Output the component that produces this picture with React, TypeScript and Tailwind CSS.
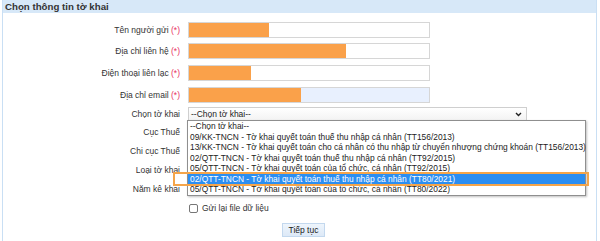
import React from "react";

const font = { fontFamily: '"Liberation Sans", Arial, sans-serif' };

function Req() {
  return <span className="text-[#e8305f]"> (*)</span>;
}

function Row({ label, mt, fill, focus }: { label: React.ReactNode; mt: string; fill: number; focus?: boolean }) {
  return (
    <div className={`flex items-center ${mt} h-[16px]`}>
      <div className="w-[177px] shrink-0 text-right pr-[0px] text-[8.5px] leading-[16px] text-[#333]">{label}</div>
      <div className={`ml-[8px] w-[242px] h-[16px] border border-[#d6d6d6] ${focus ? "bg-[#e8f0fe]" : "bg-white"} flex`}>
        <div className="h-full bg-[#faa14a]" style={{ width: fill }} />
      </div>
    </div>
  );
}

function LabelRow({ label }: { label: string }) {
  return (
    <div className="flex items-center h-[19px]">
      <div className="w-[177px] shrink-0 text-right text-[8.5px] leading-[19px] text-[#333]">{label}</div>
    </div>
  );
}

const items = [
  "--Chọn tờ khai--",
  "09/KK-TNCN - Tờ khai quyết toán thuế thu nhập cá nhân (TT156/2013)",
  "13/KK-TNCN - Tờ khai quyết toán cho cá nhân có thu nhập từ chuyển nhượng chứng khoán (TT156/2013)",
  "02/QTT-TNCN - Tờ khai quyết toán thuế thu nhập cá nhân (TT92/2015)",
  "05/QTT-TNCN - Tờ khai quyết toán của tổ chức, cá nhân (TT92/2015)",
  "02/QTT-TNCN - Tờ khai quyết toán thuế thu nhập cá nhân (TT80/2021)",
  "05/QTT-TNCN - Tờ khai quyết toán của tổ chức, cá nhân (TT80/2022)",
];

export default function App() {
  return (
    <div className="relative w-[600px] h-[241px] overflow-hidden bg-white" style={font}>
      <div className="ml-[2px] w-[595px] h-full border-l border-r border-[#c9dff4]">
        <div className="h-[13px] bg-[#d7e8f8] pl-[2px] text-[9.7px] font-bold leading-[13px] text-[#333]">
          Chọn thông tin tờ khai
        </div>
        <Row label={<>Tên người gửi<Req /></>} mt="mt-[9px]" fill={80} />
        <Row label={<>Địa chỉ liên hệ<Req /></>} mt="mt-[5px]" fill={157} />
        <Row label={<>Điện thoại liên lạc<Req /></>} mt="mt-[6px]" fill={62} />
        <Row label={<>Địa chỉ email<Req /></>} mt="mt-[6px]" fill={112} focus />
        <div className="flex items-center mt-[4px] h-[14px]">
          <div className="w-[177px] shrink-0 text-right text-[8.5px] leading-[14px] text-[#333]">Chọn tờ khai</div>
          <div className="ml-[8px] w-[339px] h-[14px] border border-[#cfcfcf] bg-gradient-to-b from-white to-[#f3f3f3] flex items-center justify-between pl-[2px] pr-[4px]">
            <span className="text-[8.5px] leading-[12px] text-[#222]">--Chọn tờ khai--</span>
            <svg width="7" height="5" viewBox="0 0 7 5">
              <path d="M1 1 L3.5 3.5 L6 1" stroke="#222" strokeWidth="1.4" fill="none" />
            </svg>
          </div>
        </div>
        <div className="mt-[2px]">
          <LabelRow label="Cục Thuế" />
          <LabelRow label="Chi cục Thuế" />
          <LabelRow label="Loại tờ khai" />
          <LabelRow label="Năm kê khai" />
        </div>
        <div className="flex items-center h-[19px]">
          <div className="ml-[186px] w-[9px] h-[9px] border border-[#767676] rounded-[2px] bg-white" />
          <span className="ml-[4px] text-[8.5px] leading-[19px] text-[#333]">Gửi lại file dữ liệu</span>
        </div>
        <div className="mt-[5px] ml-[279px] w-[43px] h-[14px] border border-[#c3d8ee] bg-gradient-to-b from-[#eef5fc] to-[#dde9f7] flex items-center justify-center text-[8.5px] leading-[12px] text-[#222]">
          Tiếp tục
        </div>
      </div>

      <div className="absolute left-[187px] top-[120px] w-[399px] h-[76px] border border-[#8f8f8f] bg-white shadow-[1px_1px_2px_rgba(0,0,0,0.25)] flex flex-col">
        {items.map((t, i) => (
          <div
            key={i}
            className={`h-[10.5px] pl-[2px] text-[8.4px] leading-[10.5px] whitespace-nowrap ${i === 5 ? "bg-[#2b8ef2] text-white" : "text-[#222]"}`}
          >
            {t}
          </div>
        ))}
      </div>

      <div className="absolute left-[173px] top-[172px] w-[416px] h-[14px] border-2 border-[#f5a54a]" />
    </div>
  );
}
